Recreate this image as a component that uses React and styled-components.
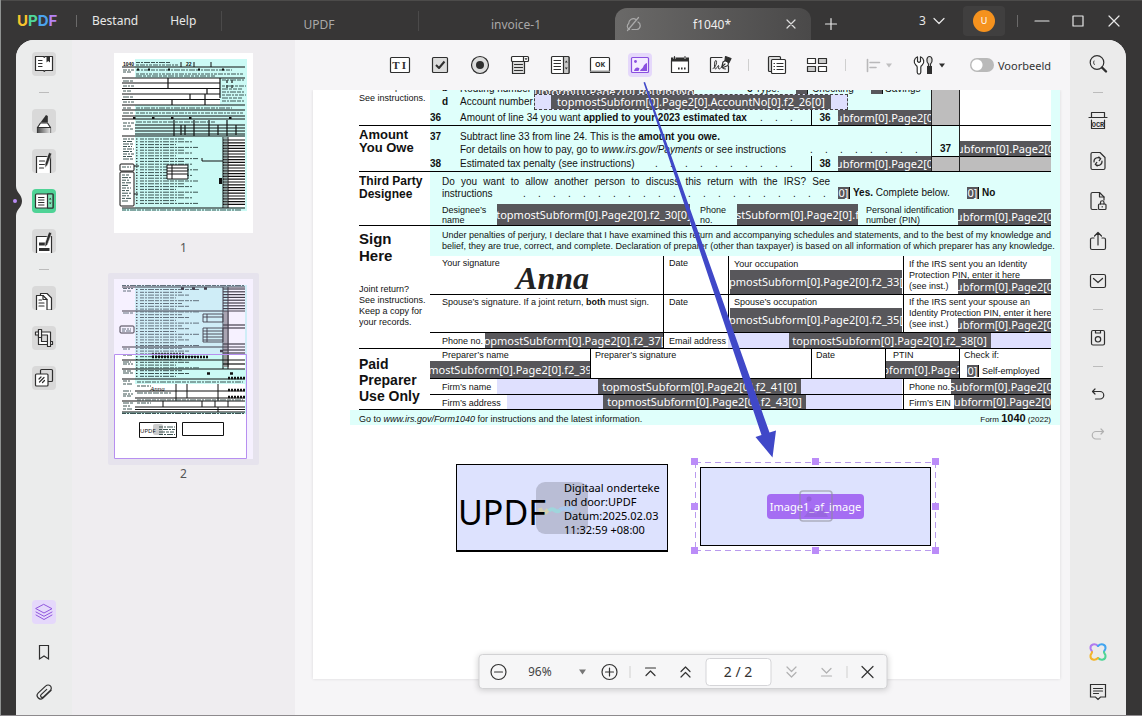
import React from 'react';
import styled, { createGlobalStyle, css } from 'styled-components';

const GlobalStyle = createGlobalStyle`
  * {
    box-sizing: border-box;
  }
  body {
    margin: 0;
    font-family: "Noto Sans", "Open Sans", sans-serif;
    font-size: 12px;
    color: #333;
  }
  button, input, select {
    font: inherit;
    color: inherit;
  }
`;

/* ---------- window ---------- */

const Window = styled.div`
  display: flex;
  flex-direction: column;
  height: 100vh;
  min-width: 1100px;
  background: #373636;
  border-bottom: 1px solid #8d8a8d;
  border-left: 1px solid #8f9291;
  overflow: hidden;
`;

const TitleBar = styled.header`
  display: flex;
  align-items: stretch;
  height: 40px;
  padding: 0 16px;
  color: #e8e8e8;
  border-top: 1px solid #4c4b4a;
`;

const Logo = styled.div`
  display: flex;
  align-items: center;
  width: 59px;
  font-family: Inter, sans-serif;
  font-weight: 700;
  font-size: 15px;
`;

const Letter = styled.span`
  color: ${(p) => p.$color};
`;

const Divider = styled.span`
  flex: none;
  align-self: center;
  width: 1px;
  height: ${(p) => p.$size || 12}px;
  background: ${(p) => p.$color || '#6b6a6a'};
`;

const Menu = styled.nav`
  display: flex;
  align-items: center;
  gap: 32px;
  width: 144px;
  padding-left: 15px;
`;

const PlainButton = styled.button`
  display: flex;
  align-items: center;
  justify-content: center;
  padding: 0;
  border: 0;
  background: none;
  cursor: pointer;
`;

const Tabs = styled.div`
  display: flex;
  flex: 1;
  align-items: flex-end;
`;

const Tab = styled.button`
  display: flex;
  align-items: center;
  justify-content: space-between;
  width: 196px;
  height: 32px;
  padding: 0 12px 0 10px;
  border: 0;
  border-radius: 12px 12px 0 0;
  background: ${(p) => (p.$active ? 'linear-gradient(90deg, #6a6968, #4a4949)' : 'none')};
  color: ${(p) => (p.$active ? '#efefef' : '#a9a8a8')};
`;

const TabName = styled.span`
  flex: 1;
  text-align: center;
`;

const TabSide = styled.span`
  display: flex;
  width: 16px;
`;

const NewTab = styled(PlainButton)`
  width: 40px;
  height: 32px;
`;

const WindowTools = styled.div`
  display: flex;
  align-items: center;
  padding-right: 4px;
`;

const TabCount = styled(PlainButton)`
  gap: 7px;
  width: 28px;
  margin-right: 17px;
`;

const Avatar = styled(PlainButton)`
  width: 42px;
  height: 30px;
  margin-right: 12px;
  border-radius: 4px;
  background: #403f3f;
`;

const Face = styled.span`
  width: 22px;
  height: 22px;
  border-radius: 50%;
  background: #f5921e;
  color: #fff;
  font-size: 9px;
  line-height: 22px;
`;

const WindowButton = styled(PlainButton)`
  width: 16px;
  height: 16px;
  margin-left: ${(p) => p.$gap || 20}px;
`;

/* ---------- body ---------- */

const Shell = styled.div`
  position: relative;
  display: flex;
  flex: 1;
  min-height: 0;
  padding: 0 16px 0 15px;
`;

const Notch = styled.svg`
  position: absolute;
  left: 10px;
  top: 146px;
`;

const Workspace = styled.div`
  display: flex;
  flex: 1;
  min-width: 0;
  border-radius: 18px 18px 0 0;
  background: #f6f5f7;
  overflow: hidden;
`;

const Rail = styled.aside`
  display: flex;
  flex-direction: column;
  align-items: center;
  gap: 16px;
  width: 56px;
  padding: 12px 0 11px;
  background: ${(p) => (p.$right ? '#ebebeb' : '#ebecec')};
`;

const RailLine = styled.span`
  width: 10px;
  height: 1px;
  background: #bcbcbc;
`;

const Spacer = styled.span`
  flex: 1;
`;

const toneOf = {
  gray: css`background: #d9d9d9;`,
  green: css`background: #4fd396;`,
  purple: css`background: #e5d8fb; color: #9057dd;`,
};

const IconButton = styled(PlainButton)`
  flex: none;
  width: ${(p) => p.$width || 24}px;
  height: 24px;
  border-radius: 4px;
  opacity: ${(p) => (p.disabled ? 0.3 : 1)};
  ${(p) => toneOf[p.$tone]}
`;

const Thumbs = styled.section`
  display: flex;
  flex-direction: column;
  align-items: center;
  width: 223px;
  padding-top: 7px;
  background: #efedf0;
`;

const Thumb = styled.button`
  padding: 6px;
  border: 0;
  border-radius: 2px;
  background: ${(p) => (p.$current ? '#e6e3ed' : 'none')};
  line-height: 0;
`;

const ThumbLabel = styled.div`
  height: 34px;
  color: #555;
  line-height: 17px;
`;

const Center = styled.main`
  position: relative;
  display: flex;
  flex-direction: column;
  flex: 1;
  min-width: 0;
`;

const ToolBar = styled.div`
  display: flex;
  flex: none;
  align-items: center;
  justify-content: flex-end;
  gap: 16px;
  height: 50px;
  padding-right: 19px;
`;

const Preview = styled.label`
  display: flex;
  align-items: center;
  gap: 4px;
  margin-left: 8px;
  font-size: 11px;
`;

const Switch = styled.input`
  appearance: none;
  width: 24px;
  height: 14px;
  margin: 0;
  border-radius: 7px;
  background: radial-gradient(circle at 7px 7px, #fff 5px, transparent 6px) #b9b9b9;
`;

const Viewer = styled.div`
  flex: 1;
  min-height: 0;
  padding: 0 10px 0 18px;
  overflow: hidden;
`;

const Page = styled.article`
  height: 589px;
  padding-left: 37px;
  background: #fff;
  box-shadow: 0 0 3px rgba(0, 0, 0, 0.12);
`;

/* ---------- the 1040 form ---------- */

const mint = '#dffffb';

const Form = styled.div`
  padding-left: 9px;
  border-right: 9px solid ${mint};
  color: #111;
  font-family: "Liberation Sans", Arial, sans-serif;
  font-size: 10px;
  line-height: 12px;
`;

const Section = styled.section`
  display: grid;
  grid-template-columns: 71px 1fr;
  height: ${(p) => p.$height}px;
  border-bottom: 1px solid #000;
`;

const Side = styled.div`
  display: flex;
  flex-direction: column;
  justify-content: ${(p) => (p.$cut ? 'flex-end' : 'flex-start')};
  padding: ${(p) => p.$top || 2}px 0 ${(p) => (p.$cut ? 21 : 0)}px;
  overflow: hidden;
`;

const SideTitle = styled.h3`
  margin: 0;
  font-size: ${(p) => p.$size}px;
  line-height: ${(p) => p.$line}px;
  white-space: nowrap;
`;

const SideNote = styled.p`
  margin: ${(p) => p.$top || 0}px 0 0;
  font-size: 9px;
  line-height: 11px;
  white-space: nowrap;
`;

const Content = styled.div`
  display: grid;
  grid-template-columns: ${(p) => p.$cols || '1fr'};
  min-width: 0;
  background: ${(p) => (p.$plain ? '#fff' : mint)};
`;

const Stack = styled.div`
  display: flex;
  flex-direction: column;
  min-width: 0;
`;

const Line = styled.div`
  display: flex;
  align-items: ${(p) => p.$align || 'center'};
  height: ${(p) => p.$height}px;
  margin-top: ${(p) => p.$top || 0}px;
  padding-left: ${(p) => p.$indent || 0}px;
  overflow: hidden;
  white-space: nowrap;
`;

const Num = styled.b`
  flex: none;
  width: 30px;
  padding-left: ${(p) => (p.$sub ? 12 : 0)}px;
`;

const Leader = styled.span`
  display: flex;
  margin-left: auto;
  padding-right: ${(p) => p.$end || 0}px;
`;

const Dot = styled.span`
  width: 15px;
`;

const Code = styled.b`
  display: flex;
  align-items: center;
  justify-content: center;
  align-self: stretch;
  width: 27px;
  border-left: 1px solid #000;
`;

const Shade = styled.div`
  display: flex;
  flex-direction: column;
  min-width: 0;
  border-left: 1px solid #222;
  background: ${(p) => p.$fill};
`;

const Block = styled.div`
  display: flex;
  flex-direction: column;
  height: 31px;
  padding-top: 15px;
  border-bottom: 1px solid #000;
  background: ${(p) => p.$fill};
  text-align: center;
  font-weight: 700;
  line-height: 16px;
`;

const FieldBox = styled.span`
  display: flex;
  flex: ${(p) => (p.$width ? 'none' : 1)};
  align-items: center;
  justify-content: center;
  align-self: ${(p) => p.$align || 'stretch'};
  width: ${(p) => (p.$width ? p.$width + 'px' : 'auto')};
  height: ${(p) => (p.$height ? p.$height + 'px' : 'auto')};
  min-width: 0;
  background: #58575b;
  color: #fff;
  font-family: "Noto Sans", sans-serif;
  font-size: 11px;
  font-weight: 400;
  line-height: 14px;
  white-space: nowrap;
  overflow: hidden;
`;

const WideField = styled.span`
  display: flex;
  flex: ${(p) => (p.$width ? 'none' : 1)};
  align-self: stretch;
  justify-content: center;
  width: ${(p) => (p.$width ? p.$width + 'px' : 'auto')};
  margin-right: ${(p) => p.$after || 0}px;
  border: ${(p) => (p.$dashed ? '1px dashed #444' : '0')};
  background: #dfe0fe;
`;

const Tick = styled(FieldBox)`
  flex: none;
  align-self: center;
  width: 12px;
  height: 12px;
  border-right: 1px solid #111;
`;

const TickLine = styled.div`
  display: flex;
  align-items: center;
  height: 12px;
  margin-top: 15px;
  white-space: nowrap;
`;

const TickText = styled.span`
  width: ${(p) => (p.$width ? p.$width + 'px' : 'auto')};
  padding-left: 3px;
`;

const Caption = styled.span`
  flex: none;
  width: ${(p) => (p.$width ? p.$width + 'px' : 'auto')};
  padding: ${(p) => p.$drop || 0}px 0 0 ${(p) => p.$left || 0}px;
  font-size: ${(p) => p.$size || 9}px;
  line-height: ${(p) => p.$line || 11}px;
  white-space: nowrap;
`;

const Justified = styled.p`
  margin: 0;
  padding: ${(p) => p.$pad || '0'};
  text-align: justify;
  text-align-last: ${(p) => (p.$loose ? 'left' : 'justify')};
  font-size: ${(p) => p.$size || 10}px;
  line-height: ${(p) => p.$line || 12}px;
  white-space: nowrap;
`;

const Oath = styled.div`
  height: 30px;
  padding: 4px 0 0 12px;
  background: ${mint};
`;

const Cells = styled.div`
  display: grid;
  grid-template-columns: ${(p) => p.$cols};
  height: ${(p) => p.$height}px;
  border-bottom: ${(p) => (p.$rule ? '1px solid #000' : '0')};
`;

const Cell = styled.div`
  display: flex;
  flex-direction: ${(p) => (p.$row ? 'row' : 'column')};
  align-items: ${(p) => (p.$row ? 'center' : 'stretch')};
  min-width: 0;
  padding: ${(p) => p.$pad || '0'};
  border-left: ${(p) => (p.$first ? '0' : '1px solid #000')};
  overflow: hidden;
`;

const Signature = styled.span`
  align-self: center;
  margin-top: -6px;
  font-family: "Brush Script MT", "Liberation Serif", serif;
  font-size: 32px;
  font-style: italic;
  font-weight: 700;
  line-height: 30px;
  color: #222;
`;

const FormFooter = styled.footer`
  display: flex;
  align-items: center;
  justify-content: space-between;
  height: 15px;
  margin-left: -9px;
  padding: 3px 0 0 9px;
  background: ${mint};
  font-size: 9px;
  white-space: nowrap;
`;

const FormName = styled.span`
  font-size: 8px;
`;

const FormNumber = styled.b`
  font-size: 11px;
`;

/* ---------- placed widgets ---------- */

const Widgets = styled.div`
  display: flex;
  align-items: flex-start;
  gap: 27px;
  padding: 37px 0 0 106px;
`;

const SignBox = styled.div`
  position: relative;
  display: flex;
  align-items: center;
  width: 212px;
  height: 88px;
  margin-top: 2px;
  padding-left: 1px;
  border: 1px solid #000;
  border-bottom-width: 2px;
  background: #dde2fe;
  color: #000;
`;

const SignMark = styled.svg`
  position: absolute;
  left: 79px;
  top: 17px;
`;

const SignName = styled.span`
  position: relative;
  width: 106px;
  padding-top: 8px;
  font-size: 34px;
`;

const SignText = styled.span`
  position: relative;
  padding-top: 2px;
  font-size: 11px;
  line-height: 14px;
  white-space: nowrap;
`;

const Selection = styled.div`
  position: relative;
  width: 241px;
  height: 89px;
  padding: 5px;
  background:
    repeating-linear-gradient(90deg, #b99aee 0 6px, transparent 6px 10px) top / 100% 1px no-repeat,
    repeating-linear-gradient(90deg, #b99aee 0 6px, transparent 6px 10px) bottom / 100% 1px no-repeat,
    repeating-linear-gradient(180deg, #b99aee 0 6px, transparent 6px 10px) left / 1px 100% no-repeat,
    repeating-linear-gradient(180deg, #b99aee 0 6px, transparent 6px 10px) right / 1px 100% no-repeat;
`;

const Handle = styled.span`
  position: absolute;
  left: ${(p) => p.$x}%;
  top: ${(p) => p.$y}%;
  width: 7px;
  height: 7px;
  margin: -4px;
  background: #bb8cf8;
`;

const ImageField = styled.div`
  display: flex;
  align-items: center;
  justify-content: center;
  height: 79px;
  border: 1px solid #000;
  background: #dde2fe;
`;

const ImageLabel = styled.span`
  position: relative;
  padding: 0 3px;
  border-radius: 4px;
  background: #a56df3;
  color: #fff;
  font-size: 11px;
  line-height: 25px;
`;

const ImageGhost = styled.svg`
  position: absolute;
  left: 50%;
  top: -4px;
  margin-left: -17px;
`;

const Arrow = styled.svg`
  position: absolute;
  left: 345px;
  top: 40px;
  pointer-events: none;
`;

const ZoomBar = styled.div`
  position: absolute;
  left: 50%;
  bottom: 26px;
  display: flex;
  align-items: center;
  gap: 8px;
  width: 409px;
  height: 35px;
  padding: 0 7px;
  transform: translateX(-50%);
  border: 1px solid #d2d2d4;
  border-radius: 4px;
  background: #f6f6f7;
  box-shadow: 0 1px 6px rgba(0, 0, 0, 0.18);
`;

const ZoomSelect = styled.select`
  appearance: none;
  flex: none;
  width: 42px;
  margin-left: 10px;
  padding: 0;
  border: 0;
  background: none;
  color: #444;
  font-size: 12px;
`;

const PageInput = styled.input`
  flex: none;
  width: 66px;
  height: 28px;
  padding: 0;
  border: 1px solid #d5d5d8;
  border-radius: 4px;
  background: #fff;
  font-size: 14px;
  text-align: center;
`;

const ZoomButton = styled(PlainButton)`
  flex: none;
  width: 24px;
  height: 24px;
  margin-left: ${(p) => (p.$apart ? 3 : 0)}px;
  opacity: ${(p) => (p.disabled ? 0.35 : 1)};
`;

/* ---------- icons ---------- */

const Icon = ({ size = 24, w, children, ...rest }) => (
  <svg
    width={w || size}
    height={size}
    viewBox={`0 0 ${w || size} ${size}`}
    fill="none"
    stroke="currentColor"
    strokeWidth="1.2"
    strokeLinecap="round"
    strokeLinejoin="round"
    aria-hidden="true"
    {...rest}
  >
    {children}
  </svg>
);

const dark = '#2f2f2f';

const leftTop = [
  ['Lezer', 'gray', (
    <>
      <path d="M3.5 4.5h8l.8.8.8-.8h7.400v14h-7.400l-.8.8-.8-.8h-8z" fill="#fff" />
      <path d="M6.500 8.500h3.500M6.500 11.500h3.500M6.500 14.500h3.500" />
      <path d="M14.500 4.500h3.500v6l-1.800-1.400-1.700 1.400z" fill={dark} stroke="none" />
    </>
  )],
  null,
  ['Annoteren', 'gray', (
    <>
      <path d="M5.500 24v-5.500l3-4.500h7l3 4.500V24" fill="#fff" />
      <path d="M5.500 19h13v5h-13z" fill="url(#inkFade)" stroke="none" />
      <path d="M5.500 18.500h13" />
      <path d="M8.500 13.500l5.500-7.500 1.800 1v6.500z" fill={dark} stroke="none" />
      <defs>
        <linearGradient id="inkFade">
          <stop offset="0" stopColor="#4a4a4a" />
          <stop offset="1" stopColor="#e6e6e6" />
        </linearGradient>
      </defs>
    </>
  )],
  ['Bewerken', 'gray', (
    <>
      <path d="M4.500 24V7.500h14V24" fill="#fff" />
      <path d="M7.500 12h5M7.500 15.500h5M7.500 19h4" />
      <path d="M17 3.500l2.800 1-4.300 11.500-2.500 2.500.2-4z" fill={dark} stroke="#e3e3e3" strokeWidth=".6" />
    </>
  )],
  ['Formulier', 'green', (
    <>
      <rect x="3.500" y="5" width="17.500" height="14" rx="1" fill="#fff" />
      <path d="M15.500 5h5.500v14h-5.500z" fill="#7be3b4" />
      <path d="M6.500 8.500h5.500M6.500 11h5.500M6.500 13.500h5.500M6.500 16h5.500" strokeWidth="1" />
      <path d="M17 10.500l1.200-1.800 1.300 1.800zM17 13.500l1.200 1.800 1.300-1.800z" fill={dark} stroke="none" />
    </>
  )],
  ['Invullen', 'gray', (
    <>
      <path d="M4.500 24V7.500h15V24" fill="#fff" />
      <path d="M7 13.500h6v3H7zM7 19h10.500v3H7z" fill={dark} stroke="none" />
      <path d="M17 3l2.800 1-4.300 11.500-2.500 2.500.2-4z" fill={dark} stroke="#e3e3e3" strokeWidth=".6" />
    </>
  )],
  null,
  ['Pagina’s', 'gray', (
    <>
      <path d="M8.500 9.500v-2h6.500l4.500 4.500V24h-4" fill="#fff" />
      <path d="M4.500 24V9.500h6.500l4 4V24" fill="#fff" />
      <path d="M11 9.500v4h4" />
      <path d="M7 14h2.500M7 17h5M7 20h5" />
    </>
  )],
  ['Bijsnijden', 'gray', (
    <>
      <path d="M6.500 3.500h3v12h11v3h-14z" fill="#fff" />
      <path d="M3.500 6h15v14.500h-3V9h-12z" fill="#fff" />
      <path d="M6.500 3.500h3v8h-3z" fill="#fff" />
    </>
  )],
  ['Vergelijken', 'gray', (
    <>
      <rect x="8.500" y="3.500" width="12" height="12" rx="1" />
      <rect x="3.500" y="8" width="12.500" height="12" rx="1" fill="#fff" />
      <path d="M7 13l2-2M7.500 16l4.500-4.500M10.500 16.500l2-2" />
    </>
  )],
];

const tools = [
  ['Tekstveld', (
    <>
      <rect x="2.500" y="4.500" width="19" height="15" rx="1" fill="#fff" />
      <text x="8" y="16" textAnchor="middle" fontSize="11" fontWeight="700" fontFamily="Liberation Serif" fill={dark} stroke="none">T</text>
      <text x="16" y="16" textAnchor="middle" fontSize="11" fontWeight="700" fontFamily="Liberation Serif" fill={dark} stroke="none">I</text>
    </>
  )],
  ['Selectievakje', (
    <>
      <rect x="4.500" y="4.500" width="15" height="15" rx="1" fill="#dcdcdc" />
      <path d="M8 12l3 3 5.500-6.500" strokeWidth="2" strokeLinecap="butt" />
    </>
  )],
  ['Keuzerondje', (
    <>
      <circle cx="12" cy="12" r="8.500" fill="#dcdcdc" />
      <circle cx="12" cy="12" r="4" fill={dark} stroke="none" />
    </>
  )],
  ['Vervolgkeuzelijst', (
    <>
      <path d="M4.500 8.500h12v12h-12z" fill="#dcdcdc" />
      <rect x="3.500" y="3.500" width="17" height="5" rx="1" fill="#fff" />
      <path d="M15.500 3.500v5M6.500 11.500h8M6.500 14.500h8M6.500 17.500h8" />
      <path d="M16.500 5.300h3l-1.500 2z" fill={dark} stroke="none" />
    </>
  )],
  ['Keuzelijst', (
    <>
      <rect x="3.500" y="3.500" width="17.500" height="17" rx="1" fill="#fff" />
      <path d="M15.500 3.500h4.500a1 1 0 0 1 1 1v15a1 1 0 0 1-1 1h-4.500z" fill="#c9c9c9" />
      <path d="M6 7.500h6.500M6 10.500h6.500M6 13.500h6.500M6 16.500h6.500" />
      <path d="M16.800 9.500l1.500-2 1.500 2zM16.800 14.500l1.500 2 1.500-2z" fill={dark} stroke="none" />
    </>
  )],
  ['Knop', (
    <>
      <rect x="2.500" y="4.500" width="19" height="15" rx="1" fill="#fff" />
      <path d="M3 18.500h18" strokeWidth="2" stroke="#999" />
      <path d="M2.500 19.500h19" />
      <text x="12" y="14" textAnchor="middle" fontSize="7" fontWeight="700" fontFamily="Noto Sans" fill={dark} stroke="none">OK</text>
    </>
  )],
  ['Afbeelding', (
    <>
      <rect x="3.500" y="4.500" width="17" height="15" rx="1" fill="#f3ebff" />
      <circle cx="7.500" cy="8.500" r="1.400" fill="currentColor" stroke="none" />
      <path d="M6 18c.5-2.500 3-5 5.500-2.500l-1 2.500zM12 18c.5-1.500 1.500-2 2.500-3 1.200-1.300.8-3.500 4.500-5v8z" fill="currentColor" stroke="none" />
    </>
  ), 'purple'],
  ['Datum', (
    <>
      <path d="M3.500 7.500h17v12h-17z" fill="#fff" />
      <path d="M3 4.500h2.500v1.500h2V4.500h8.500v1.500h2V4.500H21v4H3z" fill={dark} stroke="none" />
      <path d="M6.500 3.500v2M17 3.500v2" />
      <path d="M10 15.500h1.600M13 15.500h1.600M16 15.500h1.600" strokeLinecap="butt" strokeWidth="2" />
    </>
  )],
  ['Handtekening', (
    <>
      <path d="M14 4.500H3.500a1 1 0 0 0-1 1v13a1 1 0 0 0 1 1h16a1 1 0 0 0 1-1V13" />
      <path d="M5 15.500c3-1 4.500-7.500 3-8S6 13.500 7 15.500s2.500-3 3.500-3-1 3.500.5 3.500 1.500-1.500 2.500-1.500 1 1.500 4 1.500" strokeWidth="1" />
      <path d="M14 13.500l1-4.500 2.500-1.500 3 2-.5 3-5 2z" fill="#fff" />
      <path d="M17.500 3.500l5.500 2-2 4-4-2z" fill={dark} stroke={dark} />
      <path d="M14 13.500l3-2.500" />
    </>
  )],
];

const rightTop = [
  ['Zoeken', (
    <>
      <circle cx="11" cy="10.500" r="6.800" />
      <path d="M8 9c-.6 1-.5 2.500.3 3.500" strokeWidth="1" />
      <path d="M16 15.500l4 4" strokeWidth="2.400" />
    </>
  )],
  null,
  ['OCR', (
    <>
      <path d="M5.500 8V3.500h13V8M3 8.500h18M5.500 11v8.500h13V11" />
      <text x="12" y="18" textAnchor="middle" fontSize="7" fontWeight="700" fontFamily="Liberation Mono" fill={dark} stroke="none">OCR</text>
    </>
  )],
  ['Converteren', (
    <>
      <path d="M14 3.500H6.500a1.500 1.500 0 0 0-1.500 1.500v14a1.500 1.500 0 0 0 1.500 1.500h11a1.500 1.500 0 0 0 1.500-1.500V8.500z" />
      <path d="M8 13a4 4 0 0 1 6.500-3.500M16 12a4 4 0 0 1-6.500 3.500M12.800 8l2 1.600-1.600 2M11.200 17l-2-1.600 1.600-2" />
    </>
  )],
  ['Beveiligen', (
    <>
      <path d="M11 20.500H6.500A1.500 1.500 0 0 1 5 19V5a1.500 1.500 0 0 1 1.500-1.500h7l4.500 4.500v3" />
      <path d="M13.500 3.500v4.500H18" />
      <rect x="12.500" y="15" width="7.500" height="5.500" rx="1" />
      <path d="M14.500 15v-1.500a1.700 1.700 0 0 1 3.500 0V15M16.200 17.500v.5" />
    </>
  )],
  ['Delen', (
    <path d="M8 9H6a1.500 1.500 0 0 0-1.500 1.500V19A1.500 1.500 0 0 0 6 20.500h12a1.500 1.500 0 0 0 1.500-1.500v-8.500A1.500 1.500 0 0 0 18 9h-2M12 16V4M8.500 7L12 3.500 15.500 7" />
  )],
  ['E-mail', (
    <>
      <rect x="4.500" y="5.500" width="15" height="13" rx="1.500" />
      <path d="M7.500 9.500l4.500 4 4.500-4" />
    </>
  )],
  null,
  ['Opslaan', (
    <>
      <rect x="5.500" y="4.500" width="13" height="14.500" rx="1.500" />
      <path d="M9.500 4.500v2.500h5V4.500" />
      <circle cx="12" cy="13.300" r="2.700" />
    </>
  )],
  null,
  ['Ongedaan maken', <path d="M9 6L6.500 8.500 9 11M6.500 8.500h7.500a3.700 3.700 0 0 1 0 7.500H9.500" />],
  ['Opnieuw', <path d="M15 6l2.500 2.500L15 11M17.500 8.500H10A3.700 3.700 0 0 0 10 16h4.500" />, true],
];

const corners = [[0, 0], [50, 0], [100, 0], [0, 50], [100, 50], [0, 100], [50, 100], [100, 100]];

/* ---------- thumbnails ---------- */

const range = (from, to, step) => {
  const out = [];
  for (let v = from; v <= to; v += step) out.push(v);
  return out;
};

const dashes = ['4 1 2 1 6 1', '3 1 5 1 2 1', '6 1 3 1 4 1'];

const Words = ({ x, ys, widths }) => ys.map((y, i) => (
  <path key={y} d={`M${x} ${y}h${widths[i % widths.length]}`} stroke="#3c5453" strokeWidth="1" strokeDasharray={dashes[i % 3]} />
));

const Rules = ({ x1, x2, ys, width = 1.2 }) => ys.map((y) => (
  <path key={y} d={`M${x1} ${y}H${x2}`} stroke="#111" strokeWidth={width} />
));

const PageOne = () => (
  <svg width="139" height="180" viewBox="0 0 139 180" fill="none">
    <path d="M0 0h139v180H0z" fill="#fff" />
    <path d="M21 6h112v152H8v-3h13z" fill="#cbfaf5" />
    <path d="M8 25h98v27H8zM114 84h17v70h-17z" fill="#fff" />
    <text x="9" y="13" fontSize="5" fontWeight="700" fontFamily="Liberation Sans" fill="#111">1040</text>
    <Words x={22} ys={[9.5, 12]} widths={[34, 42]} />
    <path d="M67 9v5M80 9v5M97 9v5" stroke="#111" />
    <text x="72" y="13" fontSize="5" fontWeight="700" fontFamily="Liberation Sans" fill="#111">22</text>
    <Rules x1={8} x2={131} ys={[14, 25, 52, 57, 63, 66, 83]} />
    <Rules x1={8} x2={106} ys={[30, 35.5, 41, 46.5]} />
    <Rules x1={21} x2={131} ys={[72, 75, 78, 81]} />
    <path d="M54 25v11M93 36v5M76 41v5M91 41v11M58 46v6M106 25v20M113 27v3M118 27v3M113 32v3M118 32v3M60 67v16M67 72v10M71 72v10M80 67v16M95 67v16M113 67v16M104 72v10M122 72v10" stroke="#111" strokeWidth="1.2" />
    <Words x={22} ys={[17, 21, 23, 55, 60, 69]} widths={[96, 108, 80]} />
    <Words x={108} ys={[27, 33, 36, 39, 42, 45, 48]} widths={[22, 24, 20]} />
    <Words x={9} ys={[17, 19, 28, 33, 38, 44, 49, 55, 60, 70, 73, 76]} widths={[11, 8, 10]} />
    {range(86, 153, 2.8).map((y, i) => (
      <g key={y}>
        <Words x={26} ys={[y]} widths={[[44, 52, 36, 58][i % 4]]} />
        <path d={`M22 ${y}h1.500`} stroke="#222" />
        <path d={`M109 ${y + 1}h22`} stroke="#111" strokeWidth="1.2" />
      </g>
    ))}
    <path d="M109 84v71M114 84v71" stroke="#111" />
    <path d="M110 84h4v71h-4z" fill="#666" opacity=".5" />
    <path d="M53 112h20v14H53z" fill="#fff" />
    <path d="M53 112h21v14H53zM53 115h21M53 118h21M53 121h21M58 112v14M88 108h21M88 105v3" stroke="#111" />
    <path d="M105 125h3v6h-3z" fill="#111" />
    <Words x={9} ys={range(86, 108, 2.5)} widths={[11, 9]} />
    <rect x="6" y="111" width="14" height="7" rx="1" stroke="#111" fill="#fff" />
    <rect x="6" y="119" width="14" height="34" rx="1" stroke="#111" fill="#fff" />
    <Words x={8} ys={[114, ...range(122, 150, 2.6)]} widths={[9, 7]} />
    <path d="M20 113h5M20 141h4" stroke="#111" />
    <Rules x1={8} x2={131} ys={[155]} />
    <Words x={8} ys={[157]} widths={[120]} />
    {[23, 34, 54, 84, 108].map((x) => <path key={x} d={`M${x} 16.500h2`} stroke="#111" strokeWidth="2" />)}
    {[19, 38, 57, 75, 115].map((x) => <path key={x} d={`M${x} 65h2.500`} stroke="#111" strokeWidth="2" />)}
  </svg>
);

const PageTwo = () => (
  <svg width="139" height="180" viewBox="0 0 139 180" fill="none">
    <path d="M0 0h139v180H0z" fill="#fff" />
    <path d="M21 6h112v129H8v-2h13z" fill="#cbfaf5" />
    <path d="M114 8h17v82h-17zM21 105h110v28H21z" fill="#fff" />
    <path d="M110 32h5v56h-5z" fill="#999" />
    <Words x={8} ys={[6.5]} widths={[122]} />
    <Rules x1={8} x2={131} ys={[8, 32, 68, 81, 90, 100, 122, 133]} />
    <Rules x1={109} x2={131} ys={[...range(10, 31, 2.8), 46, 49, 65, 71, 74, 85]} />
    <path d="M109 8v82M114 8v82" stroke="#111" />
    {range(10.5, 98, 2.8).map((y, i) => (
      <g key={y}>
        <Words x={26} ys={[y]} widths={[[60, 42, 50, 36][i % 4]]} />
        <path d={`M22 ${y}h1.500`} stroke="#222" />
      </g>
    ))}
    <Words x={9} ys={[9.500, 12, 34, 70, 76, 83, 85, 92, 94, 102, 105, 112, 115, 117, 124, 127, 130]} widths={[10, 8]} />
    <path d="M89 35h20v8H89zM89 38h20M93 35v8M89 49h20v14H89zM89 52h20M89 55h20M89 58h20M89 61h20M93 49v14" stroke="#111" strokeWidth=".9" />
    <rect x="6" y="47" width="14" height="7" rx="1" stroke="#111" fill="#fff" />
    <Words x={8} ys={[50, 52]} widths={[9]} />
    <path d="M38 75h32M38 78h56" stroke="#111" strokeWidth="2.500" strokeDasharray="2 1" />
    <path d="M67 9.500h3M78 9.500h3M90 9.500h3M93 94.500h3M116 94.500h3M106 72h3" stroke="#111" strokeWidth="2.500" />
    <path d="M114 99h17M114 111h17M114 118h17" stroke="#111" strokeWidth="2.500" strokeDasharray="2 1" />
    <Rules x1={21} x2={131} ys={[112, 119, 128, 130.5]} />
    <path d="M62 105v17M73 105v14M104 105v17M49 122v6M88 122v6M101 122v6M114 122v6M104 128v5" stroke="#111" />
    <Words x={23} ys={[103, 107, 114, 121, 124]} widths={[106, 14, 34]} />
    <text x="36" y="112" fontSize="7" fontStyle="italic" fontFamily="Liberation Serif" fill="#111">Anna</text>
    <Words x={8} ys={[134.500]} widths={[122]} />
    <path d="M25.500 143.500h37v15h-37zM68.500 143.500h41v13h-41z" stroke="#111" fill="#fff" />
    <rect x="39" y="145" width="10" height="11" rx="2" fill="#ccc" />
    <text x="26" y="154" fontSize="6" fontFamily="Noto Sans" fill="#111">UPDF</text>
    <Words x={45} ys={[148, 150.500, 153, 155.500]} widths={[16]} />
    <path d="M0 0h139v180h-6V75H0z" fill="#dcc8ff" opacity=".25" />
    <path d="M.5 75.500h132v104H.5z" stroke="#b78ff0" />
  </svg>
);

const Field = ({ children, ...rest }) => (
  <FieldBox {...rest}><span>{children}</span></FieldBox>
);

const Dots = ({ count, end }) => (
  <Leader $end={end} aria-hidden="true">
    {range(1, count, 1).map((n) => <Dot key={n}>.</Dot>)}
  </Leader>
);

// narrow fields only have room for the middle of their name
const shortName = 'ubform[0].Page2[0';

const TaxForm = () => (
  <Form>
    <Section $height={36}>
      <Side $cut>
        <SideNote>Direct deposit?<br />See instructions.</SideNote>
      </Side>
      <Content $cols="1fr 28px 92px">
        <Stack>
          <Line $height={4} $align="flex-end">
            <Num $sub>b</Num>
            <Caption $size={10} $width={74}>Routing number</Caption>
            <Field $width={160}>tSubform[0].Page2[0].RoutingNo[0</Field>
            <Caption $size={10} $left={53} $width={102}><b>c</b> Type:</Caption>
            <Tick />
            <Caption $size={10} $left={4} $width={63}>Checking</Caption>
            <Tick />
            <Caption $size={10} $left={2}>Savings</Caption>
          </Line>
          <Line $height={16}>
            <Num $sub>d</Num>
            <span>Account number</span>
            <Spacer />
            <WideField $width={314} $after={83} $dashed>
              <Field $width={280}>topmostSubform[0].Page2[0].AccountNo[0].f2_26[0]</Field>
            </WideField>
          </Line>
          <Line $height={15}>
            <Num>36</Num>
            <span>Amount of line 34 you want <b>applied to your 2023 estimated tax</b></span>
            <Dots count={3} end={6} />
            <Code>36</Code>
            <Field $width={93}>{shortName}</Field>
          </Line>
        </Stack>
        <Shade $fill="#bebdbd" />
        <Shade $fill="#fff" />
      </Content>
    </Section>

    <Section $height={46}>
      <Side>
        <SideTitle $size={13} $line={13}>Amount<br />You Owe</SideTitle>
      </Side>
      <Content $cols="1fr 28px 92px">
        <Stack>
          <Line $height={17} $align="flex-end">
            <Num>37</Num>
            <span>Subtract line 33 from line 24. This is the <b>amount you owe.</b></span>
          </Line>
          <Line $height={13}>
            <Num />
            <span>For details on how to pay, go to <i>www.irs.gov/Payments</i> or see instructions</span>
            <Dots count={8} end={1} />
          </Line>
          <Line $height={15}>
            <Num>38</Num>
            <span>Estimated tax penalty (see instructions)</span>
            <Dots count={10} end={6} />
            <Code>38</Code>
            <Field $width={93}>{shortName}</Field>
          </Line>
        </Stack>
        <Shade $fill="#bebdbd">
          <Block $fill={mint}>37</Block>
        </Shade>
        <Shade $fill="#bebdbd">
          <Block $fill="#fff"><Field>{shortName}</Field></Block>
        </Shade>
      </Content>
    </Section>

    <Section $height={54}>
      <Side $top={3}>
        <SideTitle $size={12} $line={13}>Third Party<br />Designee</SideTitle>
      </Side>
      <Content>
        <Stack>
          <Cells $cols="1fr 213px" $height={32}>
            <div>
              <Justified $pad="4px 8px 0 12px">Do you want to allow another person to discuss this return with the IRS? See</Justified>
              <Line $height={12} $indent={12}>
                <span>instructions</span>
                <Dots count={21} />
              </Line>
            </div>
            <TickLine>
              <Tick>0]</Tick>
              <TickText $width={117}><b>Yes.</b> Complete below.</TickText>
              <Tick>0]</Tick>
              <TickText><b>No</b></TickText>
            </TickLine>
          </Cells>
          <Line $height={21} $indent={12}>
            <Caption $width={55} $line={10}>Designee’s<br />name</Caption>
            <Field $width={193}>topmostSubform[0].Page2[0].f2_30[0]</Field>
            <Caption $left={10} $width={47} $line={10}>Phone<br />no.</Caption>
            <Field>stSubform[0].Page2[0].f</Field>
            <Caption $left={8} $width={100} $line={10}>Personal identification<br />number (PIN)</Caption>
            <Field $width={93} $height={16} $align="flex-end">{shortName}</Field>
          </Line>
        </Stack>
      </Content>
    </Section>

    <Section $height={123}>
      <Side $top={4}>
        <SideTitle $size={15} $line={17}>Sign<br />Here</SideTitle>
        <SideNote $top={20}>Joint return?<br />See instructions.<br />Keep a copy for<br />your records.</SideNote>
      </Side>
      <Content $plain>
        <Stack>
          <Oath>
            <Justified $size={9} $line={11}>Under penalties of perjury, I declare that I have examined this return and accompanying schedules and statements, and to the best of my knowledge and</Justified>
            <Justified $size={9} $line={11} $loose>belief, they are true, correct, and complete. Declaration of preparer (other than taxpayer) is based on all information of which preparer has any knowledge.</Justified>
          </Oath>
          <Cells $cols="233px 65px 1fr 148px" $height={39} $rule>
            <Cell $first $pad="2px 0 0 12px"><Caption>Your signature</Caption><Signature>Anna</Signature></Cell>
            <Cell $pad="2px 0 0 5px"><Caption>Date</Caption></Cell>
            <Cell $pad="2px 1px 0 1px"><Caption $left={4} $line={12}>Your occupation</Caption><Field>pmostSubform[0].Page2[0].f2_33[</Field></Cell>
            <Cell $row $pad="0 0 0 5px">
              <Caption $width={49}>If the IRS sent you an Identity<br />Protection PIN, enter it here<br />(see inst.)</Caption>
              <Field $height={15} $align="flex-end">{shortName}</Field>
            </Cell>
          </Cells>
          <Cells $cols="233px 65px 1fr 148px" $height={38} $rule>
            <Cell $first $pad="2px 0 0 12px"><Caption>Spouse’s signature. If a joint return, <b>both</b> must sign.</Caption></Cell>
            <Cell $pad="2px 0 0 5px"><Caption>Date</Caption></Cell>
            <Cell $pad="2px 1px 0 1px"><Caption $left={4}>Spouse’s occupation</Caption><Field>pmostSubform[0].Page2[0].f2_35[</Field></Cell>
            <Cell $row $pad="0 0 0 5px">
              <Caption $width={49}>If the IRS sent your spouse an<br />Identity Protection PIN, enter it here<br />(see inst.)</Caption>
              <Field $height={14} $align="flex-end">{shortName}</Field>
            </Cell>
          </Cells>
          <Cells $cols="233px 1fr" $height={15}>
            <Cell $row $first $pad="0 0 0 12px"><Caption $drop={2} $width={43}>Phone no.</Caption><Field>opmostSubform[0].Page2[0].f2_37[</Field></Cell>
            <Cell $row $pad="0 0 0 5px">
              <Caption $drop={2} $width={59}>Email address</Caption>
              <WideField><Field $width={202}>topmostSubform[0].Page2[0].f2_38[0]</Field></WideField>
            </Cell>
          </Cells>
        </Stack>
      </Content>
    </Section>

    <Section $height={61}>
      <Side $top={7}>
        <SideTitle $size={14} $line={16}>Paid<br />Preparer<br />Use Only</SideTitle>
      </Side>
      <Content $plain>
        <Stack>
          <Cells $cols="160px 1fr 74px 74px 92px" $height={30} $rule>
            <Cell $first><Caption $drop={1} $left={12}>Preparer’s name</Caption><Field>mostSubform[0].Page2[0].f2_39</Field></Cell>
            <Cell $pad="0 0 0 4px"><Caption $drop={1}>Preparer’s signature</Caption></Cell>
            <Cell $pad="0 0 0 4px"><Caption $drop={1}>Date</Caption></Cell>
            <Cell><Caption $drop={1} $left={7}>PTIN</Caption><Field>bform[0].Page2</Field></Cell>
            <Cell $pad="0 0 0 4px">
              <Caption $drop={1}>Check if:</Caption>
              <Line $height={14} $top={3} $indent={3}><Tick>0]</Tick><Caption $left={3}>Self-employed</Caption></Line>
            </Cell>
          </Cells>
          <Cells $cols="1fr 148px" $height={16} $rule>
            <Cell $row $first $pad="0 1px 0 12px">
              <Caption $drop={2} $width={55}>Firm’s name</Caption>
              <WideField><Field $width={203}>topmostSubform[0].Page2[0].f2_41[0]</Field></WideField>
            </Cell>
            <Cell $row $pad="0 0 0 5px"><Caption $drop={2} $width={42}>Phone no.</Caption><Field>Subform[0].Page2[0</Field></Cell>
          </Cells>
          <Cells $cols="1fr 148px" $height={14}>
            <Cell $row $first $pad="0 1px 0 12px">
              <Caption $drop={2} $width={65}>Firm’s address</Caption>
              <WideField><Field $width={203}>topmostSubform[0].Page2[0].f2_43[0]</Field></WideField>
            </Cell>
            <Cell $row $pad="0 0 0 5px"><Caption $drop={2} $width={45}>Firm’s EIN</Caption><Field>{shortName}</Field></Cell>
          </Cells>
        </Stack>
      </Content>
    </Section>

    <FormFooter>
      <span>Go to <i>www.irs.gov/Form1040</i> for instructions and the latest information.</span>
      <FormName>Form <FormNumber>1040</FormNumber> (2022)</FormName>
    </FormFooter>
  </Form>
);

const RailItems = ({ items }) => items.map((item, i) => (
  item
    ? <IconButton key={item[0]} $tone={item[1]} aria-label={item[0]}><Icon color={dark}>{item[2]}</Icon></IconButton>
    : <RailLine key={i} />
));

export default function App() {
  return (
    <Window>
      <GlobalStyle />
      <TitleBar>
        <Logo aria-label="UPDF">
          <Letter $color="#f8c42c">U</Letter>
          <Letter $color="#4fd69a">P</Letter>
          <Letter $color="#4aa3ee">D</Letter>
          <Letter $color="#b583f5">F</Letter>
        </Logo>
        <Divider />
        <Menu>
          <PlainButton>Bestand</PlainButton>
          <PlainButton>Help</PlainButton>
        </Menu>
        <Divider $size={20} $color="#4b4a4a" />
        <Tabs>
          <Tab><TabName>UPDF</TabName></Tab>
          <Divider $size={20} $color="#4b4a4a" />
          <Tab><TabName>invoice-1</TabName></Tab>
          <Tab $active>
            <TabSide>
              <Icon size={16} color="#aaa"><path d="M4.500 13.500a3.500 3.500 0 0 1-.8-6 4.700 4.700 0 0 1 7.300-4M13 6a4 4 0 0 1-1 7.500H7M2.500 14.500L13.500 1.500" /></Icon>
            </TabSide>
            <TabName>f1040*</TabName>
            <TabSide>
              <Icon size={16} color="#ddd"><path d="M4 4l8 8M12 4l-8 8" /></Icon>
            </TabSide>
          </Tab>
          <NewTab aria-label="Nieuw tabblad"><Icon size={16}><path d="M8 2.500v11M2.500 8h11" /></Icon></NewTab>
        </Tabs>
        <WindowTools>
          <TabCount>3 <Icon size={12}><path d="M1 3.500l5 5 5-5" /></Icon></TabCount>
          <Avatar><Face>U</Face></Avatar>
          <Divider />
          <WindowButton $gap={16} aria-label="Minimaliseren"><Icon size={16}><path d="M1 8h14" /></Icon></WindowButton>
          <WindowButton aria-label="Maximaliseren"><Icon size={16}><path d="M3 3h10v10H3z" /></Icon></WindowButton>
          <WindowButton aria-label="Sluiten"><Icon size={16}><path d="M3 3l10 10M13 3L3 13" /></Icon></WindowButton>
        </WindowTools>
      </TitleBar>

      <Shell>
        <Workspace>
          <Rail>
            <RailItems items={leftTop} />
            <Spacer />
            <IconButton $tone="purple" aria-label="Miniaturen">
              <Icon strokeWidth="1"><path d="M12 4.500l8 4.200-8 4.300-8-4.300zM4 12l8 4.300 8-4.300M4 15l8 4.500 8-4.500" /></Icon>
            </IconButton>
            <IconButton aria-label="Bladwijzers">
              <Icon color={dark} strokeLinejoin="miter"><path d="M7.500 5.500h9v13.500L12 16l-4.500 3z" /></Icon>
            </IconButton>
            <IconButton aria-label="Bijlagen">
              <Icon color={dark}><path d="M19 9.800l-7.600 8.200a3.400 3.400 0 0 1-5-4.700l7-7.500a2.900 2.900 0 0 1 4.800 4.200l-6.400 7a1.600 1.600 0 0 1-2.500-2.200l5.200-5.600" transform="rotate(4 12 12)" /></Icon>
            </IconButton>
          </Rail>

          <Thumbs>
            <Thumb><PageOne /></Thumb>
            <ThumbLabel>1</ThumbLabel>
            <Thumb $current><PageTwo /></Thumb>
            <ThumbLabel>2</ThumbLabel>
          </Thumbs>

          <Center>
            <ToolBar>
              {tools.map(([name, shape, tone]) => (
                <IconButton key={name} $tone={tone} aria-label={name}><Icon color={tone ? '#8a4fe0' : dark}>{shape}</Icon></IconButton>
              ))}
              <Divider $color="#cfcfcf" />
              <IconButton aria-label="Meerdere kopieën">
                <Icon color={dark}>
                  <path d="M6 18.500H4.500a1 1 0 0 1-1-1v-13a1 1 0 0 1 1-1h10a1 1 0 0 1 1 1V6" fill="#dcdcdc" />
                  <rect x="6.500" y="6.500" width="14" height="14" rx="1" fill="#fff" />
                  <path d="M9 10.500h.5M12 10.500h6M9 13.500h.5M12 13.500h6M9 16.500h.5M12 16.500h6" />
                </Icon>
              </IconButton>
              <IconButton aria-label="Raster">
                <Icon color={dark}>
                  <rect x="2.500" y="5.500" width="8" height="5" fill="#fff" />
                  <rect x="13.500" y="5.500" width="8" height="5" fill="#ccc" />
                  <rect x="2.500" y="13.500" width="8" height="5" fill="#ccc" />
                  <rect x="13.500" y="13.500" width="8" height="5" fill="#fff" />
                </Icon>
              </IconButton>
              <Divider $color="#cfcfcf" />
              <IconButton $width={32} disabled aria-label="Uitlijnen">
                <Icon w={32} color={dark}>
                  <path d="M5.500 6.500v12M8 9.500h9.500M8 14.500h6" strokeWidth="1.600" />
                  <path d="M24 10.500h6l-3 4z" fill="#444" stroke="none" />
                </Icon>
              </IconButton>
              <IconButton $width={36} aria-label="Hulpmiddelen">
                <Icon w={36} color={dark}>
                  <path d="M7.500 3.800A5 5 0 0 0 6 12.300c.8.500 1.200 1 1.200 2v5a1.800 1.800 0 0 0 3.600 0v-5c0-1 .4-1.500 1.200-2a5 5 0 0 0-1.500-8.500v4.700l-1.500 1-1.500-1z" fill="#fff" />
                  <path d="M18.500 13v-2c-2.500-2-2-7.500 1-7.500s3.500 5.500 1 7.500v2" fill="#ddd" />
                  <path d="M17 13h5v8h-5z" fill={dark} stroke="none" />
                  <path d="M29 10.500h6l-3 4z" fill={dark} stroke="none" />
                </Icon>
              </IconButton>
              <Preview><Switch type="checkbox" />Voorbeeld</Preview>
            </ToolBar>

            <Viewer>
              <Page>
                <TaxForm />
                <Widgets>
                  <SignBox>
                    <SignMark width="52" height="52" viewBox="0 0 52 52" fill="none" strokeWidth="4">
                      <rect width="52" height="52" rx="9" fill="#b9bdd5" />
                      <path d="M4 26c2 7 6 6 8 1" stroke="#d3cfae" />
                      <path d="M13 29c4-6 7 4 11-1" stroke="#9fd6dc" />
                      <path d="M24 28c5-5 8 3 14-3" stroke="#a9c9ee" />
                    </SignMark>
                    <SignName>UPDF</SignName>
                    <SignText>Digitaal onderteke<br />nd door:UPDF<br />Datum:2025.02.03<br />11:32:59 +08:00</SignText>
                  </SignBox>
                  <Selection>
                    <ImageField>
                      <ImageLabel>
                        Image1_af_image
                        <ImageGhost width="34" height="32" viewBox="0 0 34 32" fill="none" stroke="#8c8c96" strokeOpacity=".6">
                          <rect x="1" y="1" width="32" height="30" rx="3" strokeWidth="1.500" />
                          <circle cx="10" cy="9" r="2.500" fill="#7c55b5" fillOpacity=".4" stroke="none" />
                          <path d="M5 27l7-9 5 6 6-8 6 11z" fill="#7c55b5" fillOpacity=".3" stroke="none" />
                        </ImageGhost>
                      </ImageLabel>
                    </ImageField>
                    {corners.map(([x, y]) => <Handle key={`${x}-${y}`} $x={x} $y={y} />)}
                  </Selection>
                </Widgets>
              </Page>
            </Viewer>

            <Arrow width="140" height="380" viewBox="0 0 140 380" fill="#4048c8">
              <path d="M3.500 2.500l1.500-.5 124.500 350.500 6.500-2-3.500 27-17-20.500 6-2z" />
            </Arrow>

            <ZoomBar>
              <ZoomButton aria-label="Uitzoomen"><Icon><circle cx="12" cy="12" r="7.500" /><path d="M8 12h8" /></Icon></ZoomButton>
              <ZoomSelect aria-label="Zoom" defaultValue="96%"><option>96%</option></ZoomSelect>
              <Icon size={8}><path d="M.5 1.500h7L4 6.500z" fill="#777" stroke="none" /></Icon>
              <ZoomButton $apart aria-label="Inzoomen"><Icon><circle cx="12" cy="12" r="7.500" /><path d="M8 12h8M12 8v8" /></Icon></ZoomButton>
              <Divider $color="#cfcfcf" />
              <ZoomButton aria-label="Eerste pagina"><Icon><path d="M7 8h10M7.500 15.500l4.500-4.500 4.500 4.500" /></Icon></ZoomButton>
              <ZoomButton $apart aria-label="Vorige pagina"><Icon><path d="M7.500 11.500l4.500-4.500 4.500 4.500M7.500 17l4.500-4.500 4.500 4.500" /></Icon></ZoomButton>
              <PageInput aria-label="Pagina" defaultValue="2 / 2" />
              <ZoomButton disabled aria-label="Volgende pagina"><Icon><path d="M7.500 7l4.500 4.500L16.500 7M7.500 12.500l4.500 4.500 4.500-4.500" /></Icon></ZoomButton>
              <ZoomButton $apart disabled aria-label="Laatste pagina"><Icon><path d="M7.500 8.500l4.500 4.500 4.500-4.500M7 16h10" /></Icon></ZoomButton>
              <Divider $color="#cfcfcf" />
              <ZoomButton aria-label="Balk sluiten"><Icon><path d="M6.500 6.500l11 11M17.500 6.500l-11 11" /></Icon></ZoomButton>
            </ZoomBar>
          </Center>

          <Rail $right>
            {rightTop.map((item, i) => (
              item
                ? <IconButton key={item[0]} disabled={item[2]} aria-label={item[0]}><Icon color={dark}>{item[1]}</Icon></IconButton>
                : <RailLine key={i} />
            ))}
            <Spacer />
            <IconButton aria-label="UPDF AI">
              <Icon strokeWidth="2">
                <path d="M12 6C9 3 4 4 4.500 8.500c.2 1.500 1.500 2 1.500 3.500" stroke="#b07bf0" />
                <path d="M12 6c3-3 8-2 7.500 2.500-.2 1.500-1.500 2-1.500 3.500" stroke="#42a5f0" />
                <path d="M12 18c3 3 8 2 7.500-2.500C19.300 14 18 13.500 18 12" stroke="#4fd596" />
                <path d="M12 18c-3 3-8 2-7.500-2.500C4.700 14 6 13.500 6 12" stroke="#f2b52c" />
              </Icon>
            </IconButton>
            <IconButton aria-label="Opmerkingen">
              <Icon color={dark}><path d="M4.500 4.500h15v12.500h-5L12 19.500 9.500 17h-5zM7.500 8.500h9M7.500 11h9M7.500 13.500h5" strokeLinejoin="miter" /></Icon>
            </IconButton>
          </Rail>
        </Workspace>
        <Notch width="14" height="30" viewBox="0 0 14 30">
          <path d="M0 0h5c0 7 6 8 6 15s-6 8-6 15H0z" fill="#373636" />
          <circle cx="4" cy="15" r="2" fill="#b98cf5" />
        </Notch>
      </Shell>
    </Window>
  );
}
